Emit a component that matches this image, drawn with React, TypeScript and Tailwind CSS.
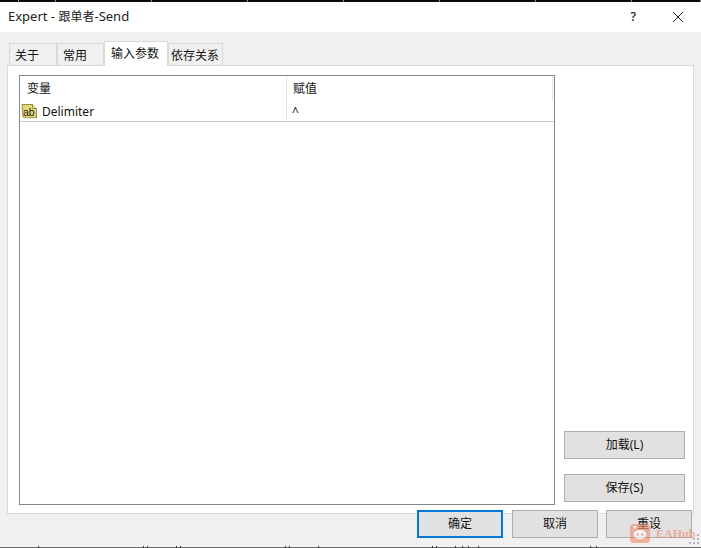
const ticks = [18, 55, 151, 247, 343, 439, 535, 631, 700];
const bottomTicks = [38, 143, 147, 176, 180, 285, 289, 318, 432, 436, 455, 462, 468, 478, 590, 596];

function Btn({ label, focus, className = "" }: { label: string; focus?: boolean; className?: string }) {
  return (
    <div
      className={
        "flex h-[28px] items-center justify-center bg-[#e1e1e1] text-[12px] text-[#111] " +
        (focus ? "border-2 border-[#0078d7] " : "border border-[#adadad] ") +
        className
      }
    >
      {label}
    </div>
  );
}

function Tab({ label, active, className }: { label: string; active?: boolean; className: string }) {
  return (
    <div
      className={
        "flex items-center whitespace-nowrap border border-b-0 border-[#d9d9d9] text-[12px] text-[#111] " +
        className +
        (active ? " relative z-10 -mb-px h-[25px] bg-white" : " h-[22px] bg-[#f0f0f0] pt-[2px]")
      }
    >
      {label}
    </div>
  );
}

function NoteIcon() {
  return (
    <svg width="17" height="17" viewBox="0 0 17 17" className="shrink-0">
      <path d="M1 1.500h10.500l4 4V15l-1.500-1-1.500 1-1.500-1-1.500 1-1.500-1-1.500 1-1.500-1-1.500 1-1.500-1z" fill="#e6d77c" stroke="#998c3c" strokeWidth="1" />
      <path d="M11.500 1.500v4h4" fill="#f7f0bd" stroke="#998c3c" />
      <text x="2" y="12.500" fontSize="10.500" fill="#1c1c10" fontFamily="'Liberation Sans', sans-serif">ab</text>
    </svg>
  );
}

export default function App() {
  return (
    <div className="relative flex h-[548px] w-[701px] flex-col overflow-hidden bg-[#f0f0f0] font-['Noto_Sans','Noto_Sans_CJK_SC',sans-serif]">
      <div className="relative h-[2px] shrink-0 bg-[#0b0b0b]">
        {ticks.map((x) => (
          <span key={x} className="absolute top-0 h-[2px] w-px bg-[#8a8a8a]" style={{ left: x }} />
        ))}
      </div>

      <div className="flex h-[30px] shrink-0 items-center justify-between bg-white pl-[8px] pr-[18px] text-[13px] text-[#222]">
        <span>Expert - <span className="text-[12px]">跟单者</span>-Send</span>
        <div className="flex items-center gap-[37px]">
          <span className="text-[12px] font-semibold text-[#333]">?</span>
          <svg width="10" height="10" viewBox="0 0 10 10" fill="none" stroke="#222" strokeWidth="1">
            <path d="M0 0l10 10M10 0L0 10" />
          </svg>
        </div>
      </div>

      <div className="flex h-[33px] shrink-0 items-end pl-[9px] pt-[9px]">
        <Tab label="关于" className="w-[48px] pl-[5px]" />
        <Tab label="常用" className="w-[47px] pl-[5px]" />
        <Tab label="输入参数" active className="w-[64px] pl-[6px]" />
        <Tab label="依存关系" className="w-[55px] pl-[2px]" />
      </div>

      <div className="mx-[7px] flex h-[449px] shrink-0 gap-[9px] border border-[#d9d9d9] bg-white pb-[8px] pl-[11px] pr-[9px] pt-[9px]">
        <div className="flex w-[536px] shrink-0 flex-col border border-[#82878c] bg-white text-[12px] text-[#111]">
          <div className="flex h-[25px] shrink-0">
            <div className="flex w-[267px] items-center border-r border-[#e5e5e5] pl-[7px]">变量</div>
            <div className="mr-px flex flex-1 items-center border-r border-[#e5e5e5] pl-[6px]">赋值</div>
          </div>
          <div className="flex h-[21px] shrink-0 border-b border-[#c8c8c8]">
            <div className="flex w-[267px] items-center gap-[4px] border-r border-[#e5e5e5] pl-[1px]">
              <NoteIcon />
              <span className="pt-[2px]">Delimiter</span>
            </div>
            <div className="flex-1 pl-[5px] pt-[2px]">^</div>
          </div>
        </div>
        <div className="flex flex-1 flex-col justify-end gap-[15px] pb-[3px]">
          <Btn label="加载(L)" className="w-[121px]" />
          <Btn label="保存(S)" className="w-[121px]" />
        </div>
      </div>

      <div className="relative z-10 -mt-[4px] flex shrink-0 pl-[417px]">
        <Btn label="确定" focus className="w-[86px]" />
        <Btn label="取消" className="ml-[9px] w-[86px]" />
        <Btn label="重设" className="ml-[8px] w-[86px]" />
      </div>

      <div className="absolute bottom-0 left-0 right-0 h-px bg-[#6e6e6e]">
        {bottomTicks.map((x) => (
          <span key={x} className="absolute bottom-0 h-[2px] w-px bg-[#3a3a3a]" style={{ left: x }} />
        ))}
      </div>

      <div className="absolute left-[630px] top-[523px] z-20 flex items-center gap-[6px] opacity-60">
        <svg width="20" height="20" viewBox="0 0 20 20">
          <rect x="0" y="1" width="20" height="19" rx="4" fill="#f08a6a" />
          <ellipse cx="10" cy="11.500" rx="6.500" ry="4.500" fill="#fff" />
          <circle cx="7.800" cy="11.500" r="1.200" fill="#f08a6a" />
          <circle cx="12.200" cy="11.500" r="1.200" fill="#f08a6a" />
          <circle cx="5" cy="4" r="1.500" fill="#fff" />
        </svg>
        <span className="pt-[2px] font-['Liberation_Serif',serif] text-[12px] font-bold text-[#f08a6a]">EAHub</span>
      </div>

      <svg width="12" height="12" viewBox="0 0 12 12" className="absolute bottom-[2px] right-0 z-20" fill="#b8b8b8">
        <rect x="8" y="0" width="2" height="2" />
        <rect x="4" y="4" width="2" height="2" />
        <rect x="8" y="4" width="2" height="2" />
        <rect x="0" y="8" width="2" height="2" />
        <rect x="4" y="8" width="2" height="2" />
        <rect x="8" y="8" width="2" height="2" />
      </svg>
    </div>
  );
}
